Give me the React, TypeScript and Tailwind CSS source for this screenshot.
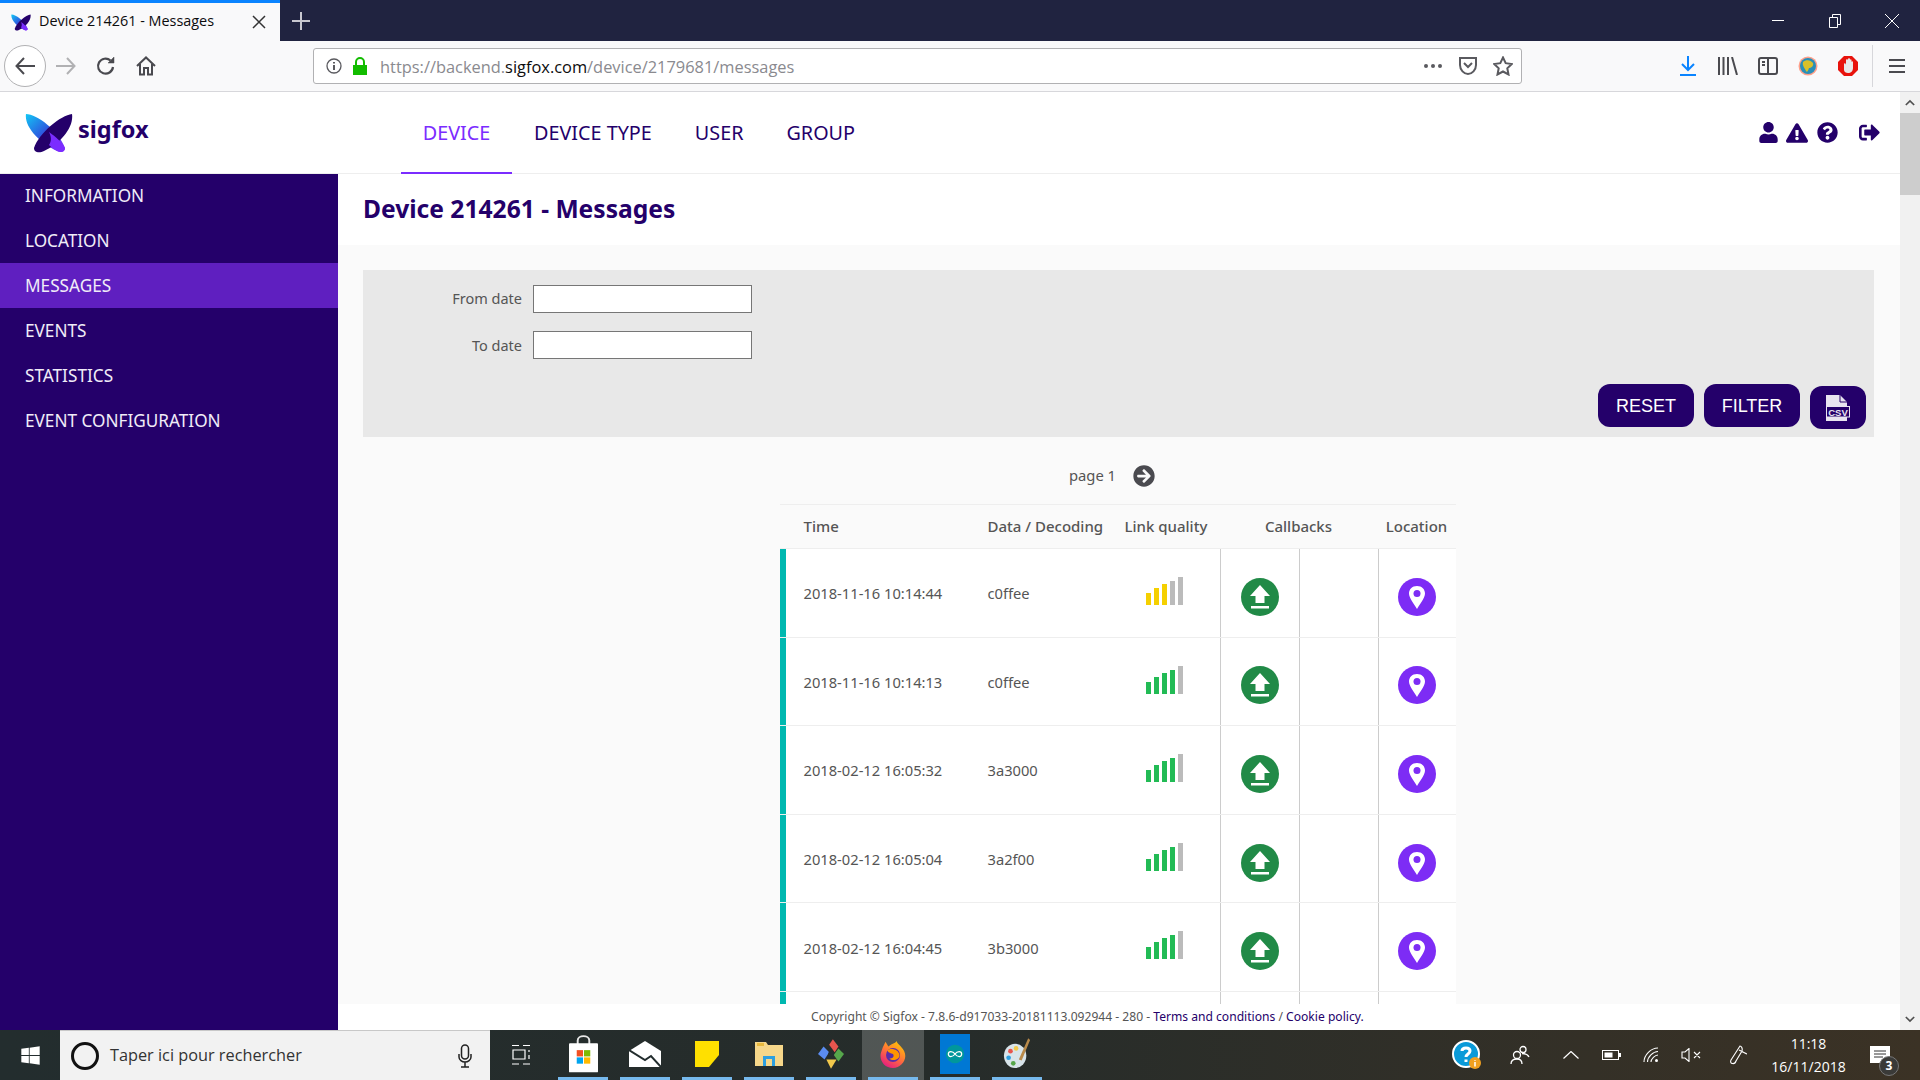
import React from 'react';
import { FaExclamationTriangle, FaQuestionCircle, FaSignOutAlt, FaUser, FaArrowCircleRight, FaWindows } from 'react-icons/fa';

const sideItems = ['INFORMATION', 'LOCATION', 'MESSAGES', 'EVENTS', 'STATISTICS', 'EVENT CONFIGURATION'];

const rows = [
  { time: '2018-11-16 10:14:44', data: 'c0ffee', level: 3, color: 'bg-[#f5d000]' },
  { time: '2018-11-16 10:14:13', data: 'c0ffee', level: 4, color: 'bg-[#22bb55]' },
  { time: '2018-02-12 16:05:32', data: '3a3000', level: 4, color: 'bg-[#22bb55]' },
  { time: '2018-02-12 16:05:04', data: '3a2f00', level: 4, color: 'bg-[#22bb55]' },
  { time: '2018-02-12 16:04:45', data: '3b3000', level: 4, color: 'bg-[#22bb55]' },
];

const barHeights = ['h-[12px]', 'h-[17px]', 'h-[21px]', 'h-[24px]', 'h-[28px]'];

const Logo = ({ className }: { className: string }) => (
  <svg viewBox="0 0 48 40" className={className}>
    <defs>
      <linearGradient id="wing" x1="0" y1="0" x2="1" y2="1">
        <stop offset="0" stopColor="#12c8f5" />
        <stop offset="0.45" stopColor="#2c5ce0" />
        <stop offset="1" stopColor="#8a2cff" />
      </linearGradient>
    </defs>
    <path d="M1 1C12 1 34 18 40 35C40 39 36 40 32 38C15 30 -1 14 1 1Z" fill="url(#wing)" />
    <path d="M47 1C36 2 14 20 9 35C9 40 15 40 19 38C36 30 49 14 47 1Z" fill="#24006a" />
    <path d="M24 19C31 24 37 29 40 35C40 39 36 40 32 38C29 36 26 34 24 32C27 28 26 23 24 19Z" fill="#7b2cff" />
  </svg>
);

const SignalBars = ({ level, color }: { level: number; color: string }) => (
  <div className="flex items-end gap-[3px] h-[28px]">
    {barHeights.map((h, i) => (
      <div key={i} className={`w-[5px] ${h} ${i < level ? color : 'bg-[#bbbbbb]'}`} />
    ))}
  </div>
);

const UploadIcon = () => (
  <svg viewBox="0 0 38 38" className="w-[38px] h-[38px]">
    <circle cx="19" cy="19" r="19" fill="#218a47" />
    <path d="M19 7L29 18H23.500V25H14.500V18H9Z" fill="#fff" />
    <rect x="10" y="28" width="18" height="2.500" fill="#fff" />
  </svg>
);

const PinIcon = () => (
  <svg viewBox="0 0 38 38" className="w-[38px] h-[38px]">
    <circle cx="19" cy="19" r="19" fill="#7d2cf5" />
    <path d="M19 8C14 8 11 11.500 11 15.500C11 20 16 26 19 31C22 26 27 20 27 15.500C27 11.500 24 8 19 8Z" fill="#fff" />
    <circle cx="19" cy="15.500" r="3.500" fill="#7d2cf5" />
  </svg>
);

const ToolIcon = ({ children, w = 'w-10' }: { children: React.ReactNode; w?: string }) => (
  <div className={`${w} h-full flex items-center justify-center shrink-0`}>{children}</div>
);

const BrowserChrome = () => (
  <>
    <div className="h-[41px] bg-[#202340] flex shrink-0 text-white">
      <div className="w-[280px] h-full bg-[#f9f9fa] border-t-[3px] border-[#0a84ff] flex items-center pl-[11px] text-[#0c0c0d]">
        <Logo className="w-[20px] h-[17px]" />
        <span className="ml-[8px] text-[14.4px] font-['Open_Sans',sans-serif] flex-1 -mt-[2px]">Device 214261 - Messages</span>
        <svg viewBox="0 0 14 14" className="w-[14px] h-[14px] mr-[14px]" stroke="#333" strokeWidth="1.500"><path d="M1 1L13 13M13 1L1 13" /></svg>
      </div>
      <div className="w-[42px] flex items-center justify-center">
        <svg viewBox="0 0 18 18" className="w-[18px] h-[18px]" stroke="#c8c8d0" strokeWidth="2"><path d="M9 0V18M0 9H18" /></svg>
      </div>
      <div className="flex-1" />
      <div className="w-[57px] flex items-center justify-center">
        <div className="w-[12px] h-px bg-white" />
      </div>
      <div className="w-[57px] flex items-center justify-center">
        <svg viewBox="0 0 12 14" className="w-[12px] h-[14px]" fill="none" stroke="#fff"><path d="M3.500 3V.5H11.500V10.500H8.500M.5 3.500H8.500V13.500H.5Z" /></svg>
      </div>
      <div className="w-[57px] flex items-center justify-center">
        <svg viewBox="0 0 14 14" className="w-[14px] h-[14px]" stroke="#fff"><path d="M0 0L14 14M14 0L0 14" /></svg>
      </div>
    </div>
    <div className="h-[51px] bg-[#f9f9fa] border-b border-[#d7d7db] flex items-center shrink-0 text-[#4a4a4f]">
      <div className="w-[46px] pl-[4px] h-full flex items-center">
        <div className="w-[42px] h-[42px] rounded-full bg-white border border-[#b1b1b3] flex items-center justify-center">
          <svg viewBox="0 0 20 18" className="w-[20px] h-[18px]" fill="none" stroke="#4a4a4f" strokeWidth="2"><path d="M9 1L1.500 9L9 17M2 9H20" /></svg>
        </div>
      </div>
      <ToolIcon><svg viewBox="0 0 20 18" className="w-[20px] h-[18px]" fill="none" stroke="#b1b1b3" strokeWidth="2"><path d="M11 1L18.500 9L11 17M18 9H0" /></svg></ToolIcon>
      <ToolIcon><svg viewBox="0 0 20 20" className="w-[20px] h-[20px]" fill="none" stroke="#4a4a4f" strokeWidth="2.200"><path d="M17 11A7.500 7.500 0 1 1 14.500 4.500" /><path d="M18 1V7H12Z" fill="#4a4a4f" strokeWidth="0.500" /></svg></ToolIcon>
      <ToolIcon><svg viewBox="0 0 20 20" className="w-[20px] h-[20px]" fill="none" stroke="#4a4a4f" strokeWidth="2"><path d="M1 10L10 1.500L19 10M4 8V18.500H8V12H12V18.500H16V8" /></svg></ToolIcon>
      <div className="w-[1209px] ml-[147px] h-[36px] bg-white border border-[#b1b1b3] rounded-[3px] flex items-center shrink-0">
        <svg viewBox="0 0 16 16" className="w-[16px] h-[16px] ml-[12px]" fill="none" stroke="#5a5a5f" strokeWidth="1.300"><circle cx="8" cy="8" r="7" /><path d="M8 7V12M8 4V5.500" strokeWidth="2" /></svg>
        <svg viewBox="0 0 16 18" className="w-[16px] h-[18px] ml-[10px]" fill="#12bc00"><path d="M1 8H15V18H1Z" /><path d="M4 8V5A4 4 0 0 1 12 5V8" fill="none" stroke="#12bc00" strokeWidth="2" /></svg>
        <div className="ml-[12px] mt-[2px] text-[16.4px] font-['Open_Sans',sans-serif] text-[#8a8a8f] flex-1">
          https://backend.<span className="text-[#0c0c0d]">sigfox.com</span>/device/2179681/messages
        </div>
        <div className="flex gap-[3px] mr-[16px]">
          <span className="w-[4px] h-[4px] rounded-full bg-[#5a5a5f]" />
          <span className="w-[4px] h-[4px] rounded-full bg-[#5a5a5f]" />
          <span className="w-[4px] h-[4px] rounded-full bg-[#5a5a5f]" />
        </div>
        <svg viewBox="0 0 20 20" className="w-[20px] h-[20px] mr-[15px]" fill="none" stroke="#5a5a5f" strokeWidth="2"><path d="M2 2H18V9C18 14 14 18 10 18C6 18 2 14 2 9Z" /><path d="M6 7L10 11L14 7" /></svg>
        <svg viewBox="0 0 20 20" className="w-[20px] h-[20px] mr-[8px]" fill="none" stroke="#5a5a5f" strokeWidth="2"><path d="M10 1.500L12.700 7.200L18.800 8L14.300 12.300L15.500 18.500L10 15.500L4.500 18.500L5.700 12.300L1.200 8L7.300 7.200Z" /></svg>
      </div>
      <div className="flex h-full ml-[146px] items-center">
        <ToolIcon><svg viewBox="0 0 16 20" className="w-[16px] h-[20px]" fill="none" stroke="#0a84ff" strokeWidth="2"><path d="M8 0V14M2 8L8 14L14 8M0 19H16" /></svg></ToolIcon>
        <ToolIcon><svg viewBox="0 0 20 18" className="w-[20px] h-[18px]" fill="none" stroke="#4a4a4f" strokeWidth="2"><path d="M1 0V18M5.500 0V18M10 0V18M14 0L19 18" /></svg></ToolIcon>
        <ToolIcon><svg viewBox="0 0 20 18" className="w-[20px] h-[18px]" fill="none" stroke="#4a4a4f" strokeWidth="2"><rect x="1" y="1" width="18" height="16" rx="2" /><path d="M10 1V17M4 5H7M4 8H7" /></svg></ToolIcon>
        <ToolIcon>
          <svg viewBox="0 0 20 20" className="w-[20px] h-[20px]">
            <circle cx="10" cy="10" r="9.500" fill="#ffa08a" />
            <circle cx="10" cy="10" r="8" fill="#2a8fb8" />
            <path d="M5 6C8 3 13 4 15 7C16 10 13 12 11 12C10 15 9 17 8 15C7 12 4 10 5 6Z" fill="#d8c02a" />
          </svg>
        </ToolIcon>
        <ToolIcon>
          <svg viewBox="0 0 20 20" className="w-[20px] h-[20px]">
            <path d="M6 0H14L20 6V14L14 20H6L0 14V6Z" fill="#e8130c" />
            <path d="M6 8V14C6 16 8 17 10 17C13 17 15 15 15 12V6C15 5 13.500 5 13.500 6V4C13.500 3 12 3 12 4V3C12 2 10 2 10 3V4C10 3 8 3 8 4V9C8 7 6 7 6 8Z" fill="#e8e8e8" />
          </svg>
        </ToolIcon>
        <div className="w-px h-[42px] bg-[#d7d7db] ml-[4px]" />
        <div className="w-[47px] flex items-center justify-center">
          <svg viewBox="0 0 16 14" className="w-[16px] h-[14px]" stroke="#4a4a4f" strokeWidth="2"><path d="M0 1H16M0 7H16M0 13H16" /></svg>
        </div>
      </div>
    </div>
  </>
);

const SigfoxHeader = () => (
  <div className="h-[82px] bg-white border-b border-[#eeeeee] flex items-center shrink-0 text-[#24006a]">
    <div className="w-[401px] flex items-center shrink-0">
      <Logo className="w-[48px] h-[40px] ml-[25px] shrink-0" />
      <span className="ml-[5px] text-[23.5px] font-bold leading-none -mt-[5px]">sigfox</span>
    </div>
    <nav className="flex h-full text-[19.8px]">
      <div className="w-[111px] h-[82px] border-b-2 border-[#7b2cff] text-[#7b2cff] flex items-center justify-center pt-[2px]">DEVICE</div>
      <div className="ml-[22px] flex items-center">DEVICE TYPE</div>
      <div className="ml-[43px] flex items-center">USER</div>
      <div className="ml-[43px] flex items-center">GROUP</div>
    </nav>
    <div className="ml-auto flex items-center mr-[20px] text-[21px]">
      <FaUser className="text-[21px]" />
      <FaExclamationTriangle className="text-[22px] ml-[7px]" />
      <FaQuestionCircle className="ml-[9px]" />
      <FaSignOutAlt className="ml-[21px]" />
    </div>
  </div>
);

const Sidebar = () => (
  <aside className="w-[338px] bg-[#24006a] shrink-0">
    {sideItems.map((item, i) => (
      <div
        key={item}
        className={`${i === 0 ? 'h-[44px]' : 'h-[45px]'} flex items-center pl-[25px] text-[17.2px] text-[#f0ecf8] ${item === 'MESSAGES' ? 'bg-[#5f1fc0]' : ''}`}
      >
        {item}
      </div>
    ))}
  </aside>
);

const FilterPanel = () => (
  <div className="ml-[25px] mr-[26px] mt-[25px] h-[167px] bg-[#e8e8e8] pt-[15px] text-[14.5px] text-[#555555]">
    <div className="flex items-center h-[28px]">
      <label className="w-[159px] text-right">From date</label>
      <input className="w-[219px] h-[28px] ml-[11px] bg-white border border-[#767676]" />
    </div>
    <div className="flex items-center h-[28px] mt-[18px]">
      <label className="w-[159px] text-right pt-[1px]">To date</label>
      <input className="w-[219px] h-[28px] ml-[11px] bg-white border border-[#767676]" />
    </div>
    <div className="flex justify-end items-start gap-[10px] mt-[25px] pr-[8px]">
      <button className="w-[96px] h-[43px] pt-[2px] rounded-[12px] bg-[#24006a] text-white text-[18px] font-['Liberation_Sans',sans-serif]">RESET</button>
      <button className="w-[96px] h-[43px] pt-[2px] rounded-[12px] bg-[#24006a] text-white text-[18px] font-['Liberation_Sans',sans-serif]">FILTER</button>
      <button className="w-[56px] h-[43px] mt-[2px] rounded-[12px] bg-[#24006a] flex items-center justify-center">
        <svg viewBox="0 0 24 26" className="w-[24px] h-[26px]">
          <path d="M0 0H14L21 7V26H0Z" fill="#e8e4f0" />
          <path d="M14 0V7H21" fill="none" stroke="#24006a" strokeWidth="1" />
          <rect x=".5" y="11.500" width="23" height="10.500" fill="#24006a" stroke="#e8e4f0" strokeWidth="1" />
          <text x="12" y="20.500" textAnchor="middle" fontSize="9.500" fontWeight="700" fill="#e8e4f0" fontFamily="Liberation Sans, sans-serif">CSV</text>
        </svg>
      </button>
    </div>
  </div>
);

const MessagesTable = () => (
  <div className="w-[676px] mx-auto">
    <div className="h-[45px] border-t border-b border-[#eeeeee] grid grid-cols-[207px_131px_102px_158px_78px] items-center font-medium text-[15px] text-[#555555]">
      <div className="pl-[24px]">Time</div>
      <div className="pl-[1px]">Data / Decoding</div>
      <div className="pl-[7px]">Link quality</div>
      <div className="text-center">Callbacks</div>
      <div className="text-center">Location</div>
    </div>
    {rows.map((row) => (
      <div key={row.time} className="h-[88.6px] bg-white border-b border-[#eeeeee] grid grid-cols-[207px_131px_102px_79px_79px_78px] text-[14.7px] text-[#555555]">
        <div className="border-l-[6px] border-[#00b8b0] pl-[18px] pt-[1px] flex items-center">{row.time}</div>
        <div className="flex items-center pt-[1px] pl-[1px]">{row.data}</div>
        <div className="pl-[28px] pt-[28px]"><SignalBars level={row.level} color={row.color} /></div>
        <div className="border-l border-[#cccccc] flex items-center justify-center pt-[8px]"><UploadIcon /></div>
        <div className="border-l border-[#cccccc]" />
        <div className="border-l border-[#cccccc] flex items-center justify-center pt-[8px]"><PinIcon /></div>
      </div>
    ))}
    {/* last row is hidden behind the footer, only its borders show */}
    <div className="h-[88.6px] bg-white grid grid-cols-[207px_131px_102px_79px_79px_78px]">
      <div className="border-l-[6px] border-[#00b8b0]" />
      <div />
      <div />
      <div className="border-l border-[#cccccc]" />
      <div className="border-l border-[#cccccc]" />
      <div className="border-l border-[#cccccc]" />
    </div>
  </div>
);

const Scrollbar = () => (
  <div className="w-[20px] bg-[#f1f1f1] flex flex-col items-center shrink-0">
    <div className="h-[21px] flex items-center justify-center">
      <svg viewBox="0 0 12 8" className="w-[10px] h-[7px]" fill="none" stroke="#505050" strokeWidth="2"><path d="M1 7L6 2L11 7" /></svg>
    </div>
    <div className="w-full h-[82px] bg-[#cdcdcd]" />
    <div className="flex-1" />
    <div className="h-[21px] flex items-center justify-center">
      <svg viewBox="0 0 12 8" className="w-[10px] h-[7px]" fill="none" stroke="#505050" strokeWidth="2"><path d="M1 1L6 6L11 1" /></svg>
    </div>
  </div>
);

const TaskApp = ({ children, active }: { children: React.ReactNode; active?: boolean }) => (
  <div className={`w-[62px] h-full flex flex-col items-center ${active ? 'bg-white/20' : ''}`}>
    <div className="flex-1 flex items-center justify-center">{children}</div>
    <div className="w-[50px] h-[3px] bg-[#76b9ed]" />
  </div>
);

const Taskbar = () => (
  <div className="h-[50px] bg-gradient-to-r from-[#232d2e] via-[#262c2a] to-[#3b3225] flex items-center text-white shrink-0 font-['Open_Sans',sans-serif]">
    <div className="w-[60px] flex items-center justify-center">
      <FaWindows className="text-[21px]" />
    </div>
    <div className="w-[430px] h-full bg-[#f2f2f2] border-t border-[#c8c8c8] flex items-center text-[#333333]">
      <div className="w-[28px] h-[28px] ml-[11px] rounded-full border-[3.500px] border-[#111111]" />
      <span className="ml-[11px] text-[16.3px]">Taper ici pour rechercher</span>
      <svg viewBox="0 0 14 24" className="w-[14px] h-[24px] ml-auto mr-[18px]" fill="none" stroke="#222" strokeWidth="1.500"><rect x="3.500" y="1" width="7" height="14" rx="3.500" /><path d="M1 10V13C1 16 4 18 7 18C10 18 13 16 13 13V10M7 18V23M3 23H11" /></svg>
    </div>
    <div className="w-[62px] flex items-center justify-center">
      <svg viewBox="0 0 20 20" className="w-[20px] h-[20px]" fill="none" stroke="#fff" strokeWidth="1.200"><path d="M1 .5H8M12 .5H19M2 5H14V14H2ZM1 19H8M12 19H19M18 5V7M18 10V14" /></svg>
    </div>
    <div className="flex h-full">
      <TaskApp>
        <svg viewBox="0 0 30 38" className="w-[29px] h-[38px]">
          <path d="M9 10V5C9 -1 21 -1 21 5V10" fill="none" stroke="#e8e8e8" strokeWidth="2" />
          <rect x="0" y="8" width="30" height="30" rx="1" fill="#fff" />
          <rect x="8" y="15" width="6.500" height="6.500" fill="#f25022" />
          <rect x="15.500" y="15" width="6.500" height="6.500" fill="#7fba00" />
          <rect x="8" y="22.500" width="6.500" height="6.500" fill="#00a4ef" />
          <rect x="15.500" y="22.500" width="6.500" height="6.500" fill="#ffb900" />
        </svg>
      </TaskApp>
      <TaskApp>
        <svg viewBox="0 0 32 26" className="w-[32px] h-[26px]">
          <path d="M0 10L16 0L32 10V26H0Z" fill="#fff" />
          <path d="M0 9L16 19L22 15L32 26" fill="none" stroke="#232d2e" strokeWidth="2" />
        </svg>
      </TaskApp>
      <TaskApp>
        <svg viewBox="0 0 24 26" className="w-[24px] h-[26px]">
          <path d="M0 0H24V26H0Z" fill="#ffe000" />
          <path d="M14 26L24 14V26Z" fill="#262c2a" />
        </svg>
      </TaskApp>
      <TaskApp>
        <svg viewBox="0 0 28 24" className="w-[28px] h-[24px]">
          <path d="M0 0H11L13 3H28V24H0Z" fill="#f6d78a" />
          <path d="M8 14H20V24H17V17H11V24H8Z" fill="#2d9fe0" />
          <rect x="2" y="1" width="7" height="3" fill="#e8b93e" />
        </svg>
      </TaskApp>
      <TaskApp>
        <svg viewBox="0 0 28 32" className="w-[26px] h-[30px]">
          <path d="M16 0L22 8L18 14L12 6Z" fill="#e8554e" />
          <path d="M6 8L12 14L7 22L0 16Z" fill="#5b8cf0" />
          <path d="M22 10L28 16L22 24L17 17Z" fill="#56a64b" />
          <path d="M9 22H20L14 32Z" fill="#f2c94c" />
          <circle cx="14" cy="16" r="3" fill="#232d2e" />
        </svg>
      </TaskApp>
      <TaskApp active>
        <svg viewBox="0 0 30 30" className="w-[28px] h-[28px]">
          <defs>
            <linearGradient id="fx" x1="0.8" y1="0" x2="0.2" y2="1">
              <stop offset="0" stopColor="#ffcb00" />
              <stop offset="0.5" stopColor="#ff7139" />
              <stop offset="1" stopColor="#e31587" />
            </linearGradient>
          </defs>
          <path d="M4 8L7 2L10 7C13 4 17 4 19 1C19 4 24 6 27 12C31 21 24 30 15 30C6 30 0 22 2 14Z" fill="url(#fx)" />
          <circle cx="15" cy="16" r="7.500" fill="#5b2ca8" />
          <path d="M9 11C13 8 21 10 22 16C22 21 15 23 11 20C14 20 17 18 15 15C13 14 10 14 9 11Z" fill="#ff9500" />
        </svg>
      </TaskApp>
      <TaskApp>
        <div className="w-[30px] h-[40px] bg-[#0078d4] flex items-center justify-center">
          <svg viewBox="0 0 24 24" className="w-[20px] h-[20px]">
            <circle cx="12" cy="12" r="11" fill="#00979c" />
            <path d="M12 12C10 9 8 9 7 9C5 9 4 10.500 4 12C4 13.500 5 15 7 15C8 15 10 15 12 12C14 9 16 9 17 9C19 9 20 10.500 20 12C20 13.500 19 15 17 15C16 15 14 15 12 12Z" fill="none" stroke="#fff" strokeWidth="1.500" />
          </svg>
        </div>
      </TaskApp>
      <TaskApp>
        <svg viewBox="0 0 30 34" className="w-[28px] h-[32px]">
          <ellipse cx="13" cy="19" rx="12" ry="13" fill="#d8e4ea" />
          <circle cx="8" cy="14" r="2.500" fill="#e8554e" />
          <circle cx="14" cy="11" r="2.500" fill="#f2c94c" />
          <circle cx="6" cy="21" r="2.500" fill="#2d9fe0" />
          <circle cx="11" cy="27" r="2.500" fill="#56a64b" />
          <path d="M27 0L29 2L20 24L17 23Z" fill="#b98a4a" />
        </svg>
      </TaskApp>
    </div>
    <div className="ml-auto flex items-center h-full">
      <div className="w-[40px] flex justify-center">
        <svg viewBox="0 0 30 30" className="w-[30px] h-[30px]">
          <circle cx="14" cy="14" r="13" fill="#0a9ad8" stroke="#fff" strokeWidth="2" />
          <path d="M10 11C10 7 18 7 18 11C18 14 14 14 14 17M14 19.500V22" fill="none" stroke="#fff" strokeWidth="3" />
          <circle cx="23" cy="23" r="6" fill="#f0a020" />
          <path d="M23 20V20.800M23 22V26.500" stroke="#fff" strokeWidth="1.500" />
        </svg>
      </div>
      <div className="w-[40px] ml-[13px] flex justify-center">
        <svg viewBox="0 0 20 20" className="w-[20px] h-[20px]" fill="none" stroke="#fff" strokeWidth="1.300"><circle cx="7" cy="10" r="3.500" /><circle cx="13" cy="4.500" r="3" /><path d="M1 19C1 15 4 14 7 14C10 14 12 15 12 19M12 8.500C15 8.500 18 10 19 12" /></svg>
      </div>
      <div className="w-[40px] ml-[11px] flex justify-center">
        <svg viewBox="0 0 16 8" className="w-[16px] h-[8px]" fill="none" stroke="#fff" strokeWidth="1.200"><path d="M.5 7.500L8 .5L15.500 7.500" /></svg>
      </div>
      <div className="w-[40px] flex justify-center">
        <svg viewBox="0 0 19 10" className="w-[19px] h-[10px]"><rect x=".5" y=".5" width="16" height="9" fill="none" stroke="#fff" /><rect x="2.500" y="2.500" width="8" height="5" fill="#fff" /><rect x="17" y="3" width="2" height="4" fill="#fff" /></svg>
      </div>
      <div className="w-[40px] flex justify-center">
        <svg viewBox="0 0 16 16" className="w-[16px] h-[16px]" fill="none" stroke="#fff" strokeWidth="1.100"><path d="M1 15C1 8 8 1 15 1M4.500 15C4.500 10 10 4.500 15 4.500M8 15C8 12 12 8 15 8" /><circle cx="13.500" cy="13.500" r="1.500" fill="#fff" stroke="none" /></svg>
      </div>
      <div className="w-[40px] flex justify-center">
        <svg viewBox="0 0 20 14" className="w-[20px] h-[14px]" fill="none" stroke="#fff" strokeWidth="1.100"><path d="M1 4H4L8 .5V13.500L4 10H1ZM13 4L19 10M19 4L13 10" /></svg>
      </div>
      <div className="w-[40px] ml-[6px] flex justify-center">
        <svg viewBox="0 0 20 20" className="w-[20px] h-[20px]" fill="none" stroke="#fff" strokeWidth="1.100"><path d="M13 1L4 15C2 19 8 20 9 16L15 6C16 3 14 1 13 1ZM12 5L16 7C18 8 19 9 20 9" /></svg>
      </div>
      <div className="w-[103px] text-center text-[14px] leading-[23px]">
        <div>11:18</div>
        <div>16/11/2018</div>
      </div>
      <div className="w-[40px] flex justify-center relative">
        <svg viewBox="0 0 20 18" className="w-[20px] h-[18px]"><path d="M0 0H20V17H0Z" fill="#fff" /><path d="M4 5H16M4 8H16M4 11H13" stroke="#333" /></svg>
        <div className="absolute left-[19px] top-[10px] w-[20px] h-[20px] rounded-full bg-[#3a3a38] border border-[#777] text-[12px] font-bold flex items-center justify-center">3</div>
      </div>
      <div className="w-[20px]" />
    </div>
  </div>
);

export default function App() {
  return (
    <div className="w-[1920px] h-[1080px] flex flex-col overflow-hidden font-['Noto_Sans',sans-serif]">
      <BrowserChrome />
      <div className="flex flex-1 min-h-0">
        <div className="flex-1 flex flex-col min-w-0">
          <SigfoxHeader />
          <div className="flex flex-1 min-h-0">
            <Sidebar />
            <main className="flex-1 flex flex-col min-w-0 bg-[#fafafa]">
              <div className="h-[71px] bg-white flex items-center pl-[25px] shrink-0">
                <h1 className="text-[24.6px] font-bold text-[#24006a] -mt-[1px]">Device 214261 - Messages</h1>
              </div>
              <FilterPanel />
              <div className="h-[67px] pt-[10px] pr-[14px] flex items-center justify-center text-[14.8px] text-[#555555] shrink-0">
                <span>page 1</span>
                <FaArrowCircleRight className="text-[22px] text-[#4a4a4f] ml-[17px]" />
              </div>
              <div className="flex-1 min-h-0 overflow-hidden pr-[3px]">
                <MessagesTable />
              </div>
              <footer className="h-[26px] bg-white flex items-center pl-[473px] text-[12.1px] text-[#555555] shrink-0">
                <span>
                  Copyright © Sigfox - 7.8.6-d917033-20181113.092944 - 280 - <span className="text-[#24006a]">Terms and conditions</span> / <span className="text-[#24006a]">Cookie policy.</span>
                </span>
              </footer>
            </main>
          </div>
        </div>
        <Scrollbar />
      </div>
      <Taskbar />
    </div>
  );
}
